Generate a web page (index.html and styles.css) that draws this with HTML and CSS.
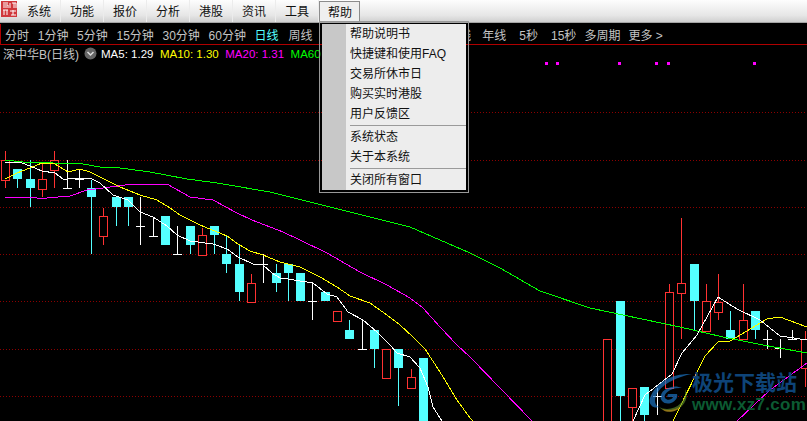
FILE: index.html
```html
<!DOCTYPE html>
<html lang="zh">
<head>
  <title>行情</title>
  <meta charset='utf-8'>
  <link rel="stylesheet" href="styles.css">
</head>
<body>
  <div class='menu_bar'>
    <svg class='app_logo' width='16' height='16' viewBox='0 0 16 16'>
      <rect width='16' height='16' fill='#d0383c'/>
      <path d='M2 2h5M2 4h5v3M2 6h4M9 2v5M11 2h4v5M13 2v5M2 9h5M3 9v5M6 9v5M9 10h6M12 9v5M10 14h5' stroke='#fff' fill='none'/>
    </svg>
    <span class='menu_item'>系统</span>
    <span class='menu_item'>功能</span>
    <span class='menu_item'>报价</span>
    <span class='menu_item'>分析</span>
    <span class='menu_item'>港股</span>
    <span class='menu_item'>资讯</span>
    <span class='menu_item'>工具</span>
    <span class='menu_item menu_open'>帮助</span>
  </div>

  <div class='period_bar'>
    <span class='period'>分时</span>
    <span class='period'>1分钟</span>
    <span class='period'>5分钟</span>
    <span class='period'>15分钟</span>
    <span class='period'>30分钟</span>
    <span class='period'>60分钟</span>
    <span class='period period_on'>日线</span>
    <span class='period'>周线</span>
    <span class='period period_cut'>线</span>
    <span class='period period_wide'>年线</span>
    <span class='period period_wide'>5秒</span>
    <span class='period period_tight'>15秒</span>
    <span class='period period_tight'>多周期</span>
    <span class='period'>更多 &gt;</span>
  </div>

  <div class='legend'>
    <span class='stock_name'>深中华B(日线)</span>
    <svg class='legend_btn' width='13' height='13' viewBox='0 0 13 13'>
      <circle cx='6.5' cy='6.5' r='6' fill='#666'/>
      <path d='M3.5 5l3 3 3-3' stroke='#ddd' stroke-width='1.5' fill='none'/>
    </svg>
    <span class='ma ma5'>MA5: 1.29</span>
    <span class='ma ma10'>MA10: 1.30</span>
    <span class='ma ma20'>MA20: 1.31</span>
    <span class='ma ma60'>MA60</span>
  </div>

  <svg class='chart' width='807' height='360' viewBox='0 61 807 360'>
    <!-- 가로 점선 -->
    <path class='grid' d='M0 112.5H807M0 160.5H807M0 207.5H807M0 254.5H807M0 301.5H807M0 349.5H807M0 396.5H807'/>

    <!-- 양봉 -->
    <path class='wick_red' d='M5.5 151V188M42.5 163V197M54.5 151V188M103.5 208V245M202.5 228V235M251.5 274V283M411.5 369V377M632.5 407V421M669.5 284V292M681.5 218V339M706.5 284V301M718.5 274V320M743.5 284V320M805.5 331V387'/>
    <path class='body_red' d='M1.5 160.5h8v20h-8zM38.5 179.5h8v10h-8zM50.5 160.5h8v10h-8zM99.5 216.5h8v20h-8zM198.5 235.5h8v20h-8zM247.5 283.5h8v19h-8zM333.5 311.5h8v10h-8zM382.5 349.5h8v29h-8zM407.5 377.5h8v11h-8zM603.5 339.5h8v82h-8zM628.5 388.5h8v19h-8zM665.5 292.5h8v96h-8zM677.5 283.5h8v10h-8zM702.5 301.5h8v30h-8zM714.5 302.5h8v10h-8zM739.5 320.5h8v19h-8zM801.5 339.5h8v29h-8z'/>

    <!-- 음봉 -->
    <path class='wick_cyan' d='M17.5 179V188M30.5 160V207M91.5 180V254M116.5 207V226M128.5 207V226M190.5 245V254M214.5 235V254M226.5 236V273M239.5 245V301M276.5 264V292M288.5 273V301M349.5 320V330M374.5 349V368M398.5 368V406M620.5 396V421M644.5 415V421M694.5 301V330M730.5 311V330M755.5 330V339'/>
    <path class='body_cyan' d='M13 169h9v10h-9zM26 179h9v9h-9zM87 188h9v9h-9zM112 197h9v10h-9zM124 197h9v10h-9zM161 216h9v29h-9zM186 226h9v19h-9zM210 226h9v9h-9zM222 254h9v10h-9zM235 264h9v28h-9zM272 273h9v10h-9zM284 264h9v9h-9zM296 273h9v28h-9zM321 292h9v9h-9zM345 330h9v9h-9zM370 330h9v19h-9zM394 349h9v19h-9zM419 358h9v63h-9zM616 301h9v95h-9zM640 387h9v28h-9zM690 264h9v37h-9zM726 330h9v9h-9zM751 311h9v19h-9z'/>

    <!-- 십자선 -->
    <path class='cross' d='M67.5 160V189M63 188.5H72M79.5 169V188M75 179.5H84M140.5 197V245M136 226.5H145M153.5 217V236M149 236.5H158M177.5 226V254M173 254.5H182M263.5 254V283M259 264.5H268M312.5 283V320M308 301.5H317M362.5 320V349M358 349.5H367M657.5 388V415M653 396.5H662M767.5 330V349M763 339.5H772M780.5 339V358M775 348.5H785M792.5 330V340M788 339.5H797'/>

    <!-- 이동평균선 -->
    <polyline class='ma_line line_green' points='5,160 23,162 83,164 100,167 120,168 150,172 187,179 217,183 270,192 382,220 410,227 440,240 470,253 500,268 540,291 590,308 623,315 680,327 723,337 763,345 807,353'/>
    <polyline class='ma_line line_magenta' points='5,197 23,197 37,198 47,198 70,196 87,190 103,188 133,184 167,184 190,197 213,200 237,213 252,220 283,232 300,240 327,253 360,272 387,285 410,298 423,308 440,327 457,345 470,357 532,421'/>
    <polyline class='ma_line line_magenta' points='737,421 770,390 807,363'/>
    <polyline class='ma_line line_yellow' points='5,179 17,173 30,168 42,163 55,164 68,172 80,169 90,172 100,177 120,187 140,195 157,200 170,208 180,215 200,225 227,236 238,244 250,251 263,255 280,262 300,267 320,277 337,287 350,296 370,303 387,315 400,325 413,337 425,349 440,372 457,400 470,418 473,421'/>
    <polyline class='ma_line line_yellow' points='673,421 705,356 718,342 730,341 767,319 780,317 807,327'/>
    <polyline class='ma_line line_white' points='5,163 13,162 22,163 30,166 42,171 55,173 63,179 68,179 80,178 90,178 100,183 113,195 128,200 140,212 153,217 167,226 177,235 190,241 213,244 227,249 238,257 253,264 263,265 272,273 280,278 288,279 300,281 313,283 327,294 337,297 348,312 363,320 377,332 390,345 397,353 410,357 420,368 428,387 433,407 442,421'/>
    <polyline class='ma_line line_white' points='633,421 645,395 672,374 682,353 697,335 718,297 737,309 760,320 780,336 807,340'/>

    <!-- 신호 점 -->
    <path class='signal' d='M545 62h3v3h-3zM556 62h3v3h-3zM618 62h3v3h-3zM655 62h3v3h-3zM667 62h3v3h-3zM753 62h3v3h-3z'/>
  </svg>

  <ul class='dropdown'>
    <li class='drop_item'>帮助说明书</li>
    <li class='drop_item'>快捷键和使用FAQ</li>
    <li class='drop_item'>交易所休市日</li>
    <li class='drop_item'>购买实时港股</li>
    <li class='drop_item'>用户反馈区</li>
    <li class='drop_line'></li>
    <li class='drop_item'>系统状态</li>
    <li class='drop_item'>关于本系统</li>
    <li class='drop_line'></li>
    <li class='drop_item'>关闭所有窗口</li>
  </ul>

  <div class='watermark'>
    <svg class='mark_logo' width='46' height='46' viewBox='0 0 46 46'>
      <path d='M44 3C26 2 8 10 2 27c-2 6 3 11 9 9-4-2-5-6-3-11C12 14 28 6 44 3z' fill='#1c78c8' opacity='.85'/>
      <path d='M34 17c-8-4-19 0-21 7-2 6 4 10 10 8 5-2 7-6 6-9h-9l-1 3h6c-1 3-6 4-8 1-2-4 5-11 17-10z' fill='#1c78c8' opacity='.85'/>
      <path d='M37 18c2 10-6 20-18 20-3 0-6-1-8-2 6 6 17 6 23-1 5-5 6-12 3-17z' fill='#5d8a28' opacity='.85'/>
      <path d='M14 38c6 2 14 1 19-3-3 6-15 8-19 3z' fill='#c79b1e' opacity='.85'/>
    </svg>
    <div class='mark_text'>
      <div class='mark_title'>极光下载站</div>
      <div class='mark_url'>www.xz7.com</div>
    </div>
  </div>
</body>
</html>
```

FILE: styles.css
```css
*, ::before, ::after {
  box-sizing: border-box;
  margin: 0; padding: 0;
}

html, body {
  height: 100%;
  overflow: hidden;
}
body {
  position: relative;
  background: black;
  font-family: "Liberation Sans", "Noto Sans CJK SC", sans-serif;
  font-size: 12px;
}

.menu_bar {
  display: flex;
  align-items: flex-start;
  height: 23px;
  padding-left: 1px;
  background: linear-gradient(#fdfdfd, #e6e6e6 70%, #cfcfcf);
  border-bottom: 1px solid #a4a4a4;
}
.app_logo {
  flex: none;
  margin: 1px 1px 0 0;
}
.menu_item {
  width: 43px;
  height: 22px;
  line-height: 24px;
  text-align: center;
  color: #111;
  border-right: 1px solid #ececec;
}
.menu_open {
  width: 41px;
  height: 21px;
  margin-top: 1px;
  padding-left: 1px;
  background: #efefef;
  border: 1px solid #8c8c8c;
  border-bottom: 0;
  line-height: 22px;
}

.period_bar {
  display: flex;
  align-items: center;
  height: 21px;
  margin-top: 1px;
  padding-left: 4px;
  border-left: 1px solid #b00000;
  border-bottom: 1px solid #b00000;
  color: #c4c4c4;
  white-space: nowrap;
}
.period {
  margin-right: 8.7px;
}
.period_on {
  color: #55ffff;
  margin-right: 10px;
}
/* 메뉴 뒤에 가려지고 끝자락만 보이는 탭 */
.period_cut {
  width: 3px;
  margin: 0 11px 0 147px;
  overflow: hidden;
  direction: rtl;
}
.period_wide {
  margin-right: 13px;
}
.period_tight {
  margin-right: 8px;
}

.legend {
  display: flex;
  align-items: center;
  height: 15px;
  margin-top: 1px;
  padding-left: 3px;
  font-size: 11.5px;
  white-space: nowrap;
}
.stock_name {
  color: #c4c4c4;
  font-size: 12px;
}
.legend_btn {
  flex: none;
  margin: 0 4px 0 5px;
}
.ma {
  margin-right: 6.5px;
}
.ma5 { color: white; }
.ma10 { color: yellow; }
.ma20 { color: #ff00ff; }
.ma60 { color: #00ff00; }

.chart {
  display: block;
  shape-rendering: crispEdges;
}
.grid {
  fill: none;
  stroke: #8c0000;
  stroke-width: 1;
  stroke-dasharray: 1 2;
  shape-rendering: auto;
}
.wick_red, .wick_cyan, .cross, .ma_line {
  fill: none;
  stroke-width: 1;
}
.wick_red { stroke: #ff3232; }
.body_red { fill: black; stroke: #ff3232; stroke-width: 1; }
.wick_cyan { stroke: #54ffff; }
.body_cyan { fill: #54ffff; }
.cross { stroke: white; }
.line_green { stroke: #00ff00; }
.line_magenta { stroke: #ff00ff; }
.line_yellow { stroke: yellow; }
.line_white { stroke: white; }
.signal { fill: #ff00ff; }

/* 열린 메뉴는 차트 위에 겹침 */
.dropdown {
  position: absolute;
  left: 319px; top: 21px;
  width: 150px;
  padding: 2px;
  list-style: none;
  background: linear-gradient(90deg, #c8c8c8 24px, #ededed 24px) content-box #ededed;
  border: 1px solid #999;
  color: #111;
}
.drop_item {
  height: 20px;
  line-height: 21px;
  padding-left: 28px;
  white-space: nowrap;
}
.drop_line {
  height: 1px;
  margin: 1px 0 1px 28px;
  background: #9a9a9a;
}

/* 워터마크 */
.watermark {
  position: absolute;
  left: 648px; top: 369px;
  display: flex;
  align-items: flex-start;
}
.mark_logo {
  flex: none;
  margin-top: 2px;
  opacity: .8;
}
.mark_text {
  margin-left: -2px;
}
.mark_title {
  font-size: 21px;
  line-height: 27px;
  font-weight: 700;
  color: #0e4478;
}
.mark_url {
  font-size: 17px;
  line-height: 18px;
  font-weight: 700;
  color: #0c5a32;
  letter-spacing: .3px;
}
```
